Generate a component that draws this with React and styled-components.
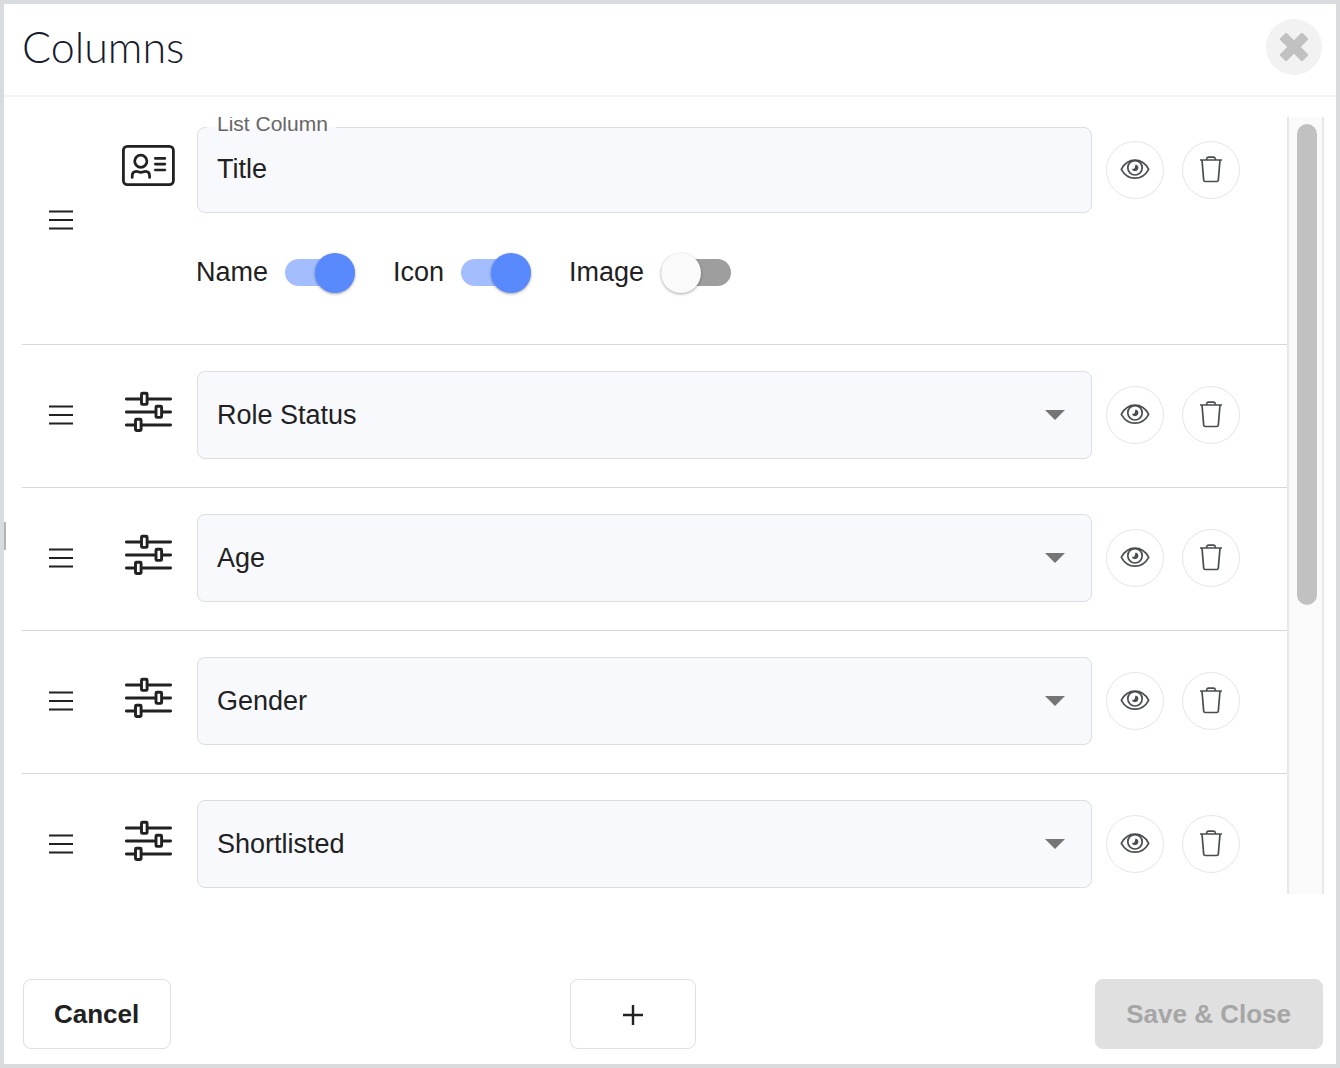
import React, { useState } from "react";
import styled, { createGlobalStyle } from "styled-components";

const initialColumns = [
  { id: "role", value: "Role Status" },
  { id: "age", value: "Age" },
  { id: "gender", value: "Gender" },
  { id: "shortlisted", value: "Shortlisted" },
];

const MenuIcon = () => (
  <svg width="24" height="20" viewBox="0 0 24 20" stroke="#212121" strokeWidth="2">
    <path d="M0 1.5h24M0 10h24M0 18.5h24" />
  </svg>
);

const CardIcon = () => (
  <svg width="54" height="42" viewBox="0 0 54 42" fill="none" stroke="#212121" strokeLinecap="round">
    <rect x="1.4" y="1.4" width="50" height="38.2" rx="4" strokeWidth="2.8" />
    <circle cx="18.8" cy="16.3" r="6.1" strokeWidth="2.8" />
    <path d="M10.200 32.400v-1.200c0-3 1.800-4.800 4.200-4.800 1.400 0 2.300.9 4.500.9s3.100-.9 4.500-.9c2.400 0 4.200 1.800 4.200 4.800v1.200" strokeWidth="2.8" />
    <path d="M33.300 13.400h9.600M33.300 19.100h9.600M33.300 25h9.600" strokeWidth="2.600" />
  </svg>
);

const SlidersIcon = () => (
  <svg width="48" height="42" viewBox="0 0 48 42" fill="#fff" stroke="#212121" strokeWidth="2.9" strokeLinecap="round">
    <path d="M1.400 9h44.200M1.400 22h44.200M1.400 35h44.200" />
    <rect x="16.500" y="3.200" width="5.600" height="11.200" rx="1" />
    <rect x="31" y="16.200" width="5.600" height="11.200" rx="1" />
    <rect x="10.500" y="29.300" width="5.600" height="11.200" rx="1" />
  </svg>
);

const EyeIcon = () => (
  <svg width="30" height="22" viewBox="0 0 30 22" fill="none" stroke="#4a4d50" strokeWidth="1.7" strokeLinejoin="round">
    <path d="M1.300 11.300C4.500 5.400 9.300 2.200 15 2.200s10.500 3.200 13.700 9.100C25.500 17 20.700 20.200 15 20.200S4.500 17 1.300 11.300z" />
    <circle cx="15" cy="9.800" r="7.200" />
    <path d="M15.600 6.400a3.400 3.400 0 1 1-3.900 4.200c1.100.5 2.100.3 2.700-.4.700-.8.500-2.300 1.200-3.800z" fill="#4a4d50" stroke="none" />
  </svg>
);

const TrashIcon = () => (
  <svg width="24" height="28" viewBox="0 0 24 28" fill="none" stroke="#4a4d50" strokeWidth="1.700" strokeLinejoin="round">
    <path d="M1 5h22M7.400 5l.3-1.300c.2-1 .8-1.500 1.800-1.500h5c1 0 1.600.5 1.800 1.500l.3 1.300" />
    <path d="M3 5l1.700 20.100c.1.900.6 1.400 1.500 1.400h11.600c.9 0 1.400-.5 1.500-1.400L21 5" />
  </svg>
);

const CrossIcon = () => (
  <svg width="30" height="30" viewBox="0 0 30 30" fill="#c1c1c1">
    <rect x="-1" y="10.200" width="32" height="9.600" rx="1.300" transform="rotate(45 15 15)" />
    <rect x="-1" y="10.200" width="32" height="9.600" rx="1.300" transform="rotate(-45 15 15)" />
  </svg>
);

const PlusIcon = () => (
  <svg width="22" height="22" viewBox="0 0 22 22" stroke="#212121" strokeWidth="2.400">
    <path d="M1 12h20M11 2v20" />
  </svg>
);

function Actions({ name }) {
  return (
    <ActionGroup>
      <RoundButton type="button" aria-label={`Show ${name}`}><EyeIcon /></RoundButton>
      <RoundButton type="button" aria-label={`Delete ${name}`}><TrashIcon /></RoundButton>
    </ActionGroup>
  );
}

function App() {
  const [title, setTitle] = useState("Title");
  const [columns, setColumns] = useState(initialColumns);
  const [toggles, setToggles] = useState({ Name: true, Icon: true, Image: false });

  const onToggle = (key) => setToggles({ ...toggles, [key]: !toggles[key] });

  const onColumnChange = (id, value) =>
    setColumns(columns.map((column) => (column.id === id ? { ...column, value } : column)));

  return (
    <Dialog>
      <GlobalStyle />
      <EdgeGrip />
      <Header>
        <Heading>Columns</Heading>
        <CloseButton type="button" aria-label="Close"><CrossIcon /></CloseButton>
      </Header>

      <Content>
        <List>
          {/* title column, with its own toggles */}
          <TitleRow>
            <Handle type="button" aria-label="Move Title"><MenuIcon /></Handle>
            <RowBody>
              <Line>
                <TypeIcon><CardIcon /></TypeIcon>
                <Field>
                  <FieldLabel htmlFor="list-column">List Column</FieldLabel>
                  <TextInput id="list-column" value={title} onChange={(e) => setTitle(e.target.value)} />
                </Field>
                <Actions name="Title" />
              </Line>
              <Toggles>
                {Object.keys(toggles).map((key) => (
                  <ToggleLabel key={key}>
                    {key}
                    <Switch type="checkbox" checked={toggles[key]} onChange={() => onToggle(key)} />
                  </ToggleLabel>
                ))}
              </Toggles>
            </RowBody>
          </TitleRow>

          {columns.map((column) => (
            <Row key={column.id}>
              <Handle type="button" aria-label={`Move ${column.value}`}><MenuIcon /></Handle>
              <RowBody>
                <Line>
                  <TypeIcon><SlidersIcon /></TypeIcon>
                  <Field>
                    <Select
                      aria-label="Column"
                      value={column.value}
                      onChange={(e) => onColumnChange(column.id, e.target.value)}
                    >
                      {initialColumns.map(({ id, value }) => (
                        <option key={id}>{value}</option>
                      ))}
                    </Select>
                    <Caret viewBox="0 0 20 10"><path d="M0 0h20L10 10z" fill="#757575" /></Caret>
                  </Field>
                  <Actions name={column.value} />
                </Line>
              </RowBody>
            </Row>
          ))}
        </List>
        <ScrollTrack><ScrollThumb /></ScrollTrack>
      </Content>

      <Footer>
        <FooterButton type="button">Cancel</FooterButton>
        <AddButton type="button" aria-label="Add column"><PlusIcon /></AddButton>
        <FooterButton type="button" disabled>Save &amp; Close</FooterButton>
      </Footer>
    </Dialog>
  );
}

const GlobalStyle = createGlobalStyle`
  * {
    box-sizing: border-box;
  }

  body {
    margin: 0;
    color: #212121;
    font-family: "Liberation Sans", Arial, sans-serif;
    font-size: 27px;
  }

  button, input, select {
    font: inherit;
    color: inherit;
    margin: 0;
  }

  svg {
    display: block;
  }
`;

const Dialog = styled.div`
  position: relative;
  display: flex;
  flex-direction: column;
  height: 100vh;
  border: 4px solid #d9dcdf;
  background: #fff;
`;

const EdgeGrip = styled.div`
  position: absolute;
  left: 0;
  top: 518px;
  width: 2px;
  height: 28px;
  background: #b3b6b9;
`;

const Header = styled.header`
  display: flex;
  align-items: center;
  justify-content: space-between;
  padding: 15px 14px 20px 18px;
  border-bottom: 2px solid #f3f4f5;
`;

const Heading = styled.h1`
  margin: 0;
  color: #161b2e;
  font-family: Lato, "Liberation Sans", sans-serif;
  font-size: 43px;
  font-weight: 300;
  line-height: 56px;
`;

const CloseButton = styled.button`
  display: grid;
  place-items: center;
  width: 56px;
  height: 56px;
  padding: 0;
  border: 0;
  border-radius: 50%;
  background: #f2f2f2;
`;

const Content = styled.main`
  display: flex;
  flex: 1;
  min-height: 0;
  margin: 20px 12px 85px 18px;
`;

const List = styled.div`
  flex: 1;
  overflow-y: auto;
  scrollbar-width: none;
`;

const Row = styled.div`
  display: flex;
  align-items: center;
  padding: 26px 47px 28px 0;
  border-bottom: 1px solid #d6d8da;
`;

const TitleRow = styled(Row)`
  padding-top: 10px;
  padding-bottom: 31px;
`;

const Handle = styled.button`
  display: grid;
  place-items: center;
  width: 78px;
  height: 44px;
  padding: 0;
  border: 0;
  background: none;
  cursor: grab;
`;

const RowBody = styled.div`
  flex: 1;
`;

const Line = styled.div`
  display: flex;
  align-items: center;
`;

const TypeIcon = styled.div`
  display: flex;
  justify-content: center;
  width: 97px;
  padding-bottom: 8px;
`;

const Field = styled.div`
  position: relative;
  flex: 1;
`;

const FieldLabel = styled.label`
  position: absolute;
  top: -10px;
  left: 10px;
  padding: 0 8px 0 10px;
  color: #666;
  background: linear-gradient(#fff 10px, #f8f9fd 10px);
  font-size: 21px;
  line-height: 14px;
`;

const TextInput = styled.input`
  display: block;
  width: 100%;
  height: 86px;
  padding: 0 19px 2px;
  border: 1px solid #dbdde2;
  border-radius: 8px;
  background: #f8f9fd;
`;

const Select = styled.select`
  display: block;
  appearance: none;
  width: 100%;
  height: 88px;
  padding: 0 60px 0 19px;
  border: 1px solid #dbdde2;
  border-radius: 8px;
  background: #f8f9fd;
`;

const Caret = styled.svg`
  position: absolute;
  top: 39px;
  right: 27px;
  width: 20px;
  height: 10px;
  pointer-events: none;
`;

const ActionGroup = styled.div`
  display: flex;
  gap: 18px;
  margin-left: 14px;
`;

const RoundButton = styled.button`
  display: grid;
  place-items: center;
  width: 58px;
  height: 58px;
  padding: 0 0 3px;
  border: 1px solid #e4e5e6;
  border-radius: 50%;
  background: #fff;
`;

const Toggles = styled.div`
  display: flex;
  align-items: center;
  gap: 38px;
  height: 81px;
  margin-top: 19px;
  padding-left: 96px;
`;

const ToggleLabel = styled.label`
  display: flex;
  align-items: center;
  gap: 17px;
`;

const Switch = styled.input`
  display: grid;
  align-items: center;
  appearance: none;
  width: 70px;
  height: 40px;

  &::before,
  &::after {
    content: "";
    grid-area: 1 / 1;
  }

  &::before {
    height: 27px;
    border-radius: 14px;
    background: ${({ checked }) => (checked ? "#a3bdff" : "#9e9e9e")};
  }

  &::after {
    justify-self: ${({ checked }) => (checked ? "end" : "start")};
    width: 40px;
    height: 40px;
    border-radius: 50%;
    background: ${({ checked }) => (checked ? "#588afe" : "#fafafa")};
    box-shadow: 0 1px 3px rgba(0, 0, 0, 0.35);
  }
`;

const ScrollTrack = styled.div`
  width: 37px;
  padding: 7px 0;
  border: solid #e8e8e8;
  border-width: 0 2px;
  background: #fafafa;
`;

const ScrollThumb = styled.div`
  width: 20px;
  height: 63%;
  margin-left: 8px;
  border-radius: 10px;
  background: #c1c1c1;
`;

const Footer = styled.footer`
  display: flex;
  justify-content: space-between;
  padding: 0 13px 15px 19px;
`;

const FooterButton = styled.button`
  height: 70px;
  padding: 0 31px 0 30px;
  border: 1px solid #dfe0e1;
  border-radius: 8px;
  background: #fff;
  font-size: 26px;
  font-weight: 700;

  &:disabled {
    border-color: #e0e0e0;
    background: #e0e0e0;
    color: #a6a6a6;
  }
`;

const AddButton = styled(FooterButton)`
  display: grid;
  place-items: center;
  padding: 0 51px;
`;

export default App;
